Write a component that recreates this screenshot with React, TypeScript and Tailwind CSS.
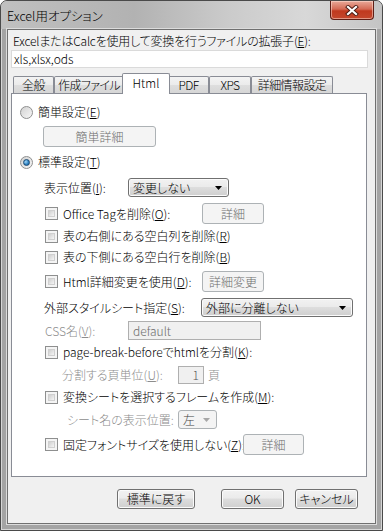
import React from "react";

// Win7 style dialog: "Excel用オプション"

const K: React.FC<{ c: string }> = ({ c }) => <u className="underline-offset-[1px]">{c}</u>;

const btnOn =
  "rounded-[3px] border border-[#707070] bg-[linear-gradient(#f2f2f2_0%,#ebebeb_45%,#dddddd_50%,#cfcfcf_100%)] shadow-[inset_0_0_0_1px_#fbfbfb] text-black";
const btnOff = "rounded-[3px] border border-[#adb2b5] bg-[#f4f4f4] text-[#6d6d6d]";

const Button: React.FC<{ w: string; label: string; off?: boolean; h?: string }> = ({ w, label, off, h }) => (
  <div className={`${w} ${h ?? "h-full"} flex items-center justify-center ${off ? btnOff : btnOn}`}>{label}</div>
);

const Arrow: React.FC<{ color: string }> = ({ color }) => (
  <svg width="7" height="4" viewBox="0 0 7 4" className="shrink-0">
    <path d="M0 0H7L3.5 4Z" fill={color} />
  </svg>
);

const Combo: React.FC<{ w: string; text: string; off?: boolean }> = ({ w, text, off }) => (
  <div className={`${w} h-full flex items-center pl-[4px] pr-[6px] ${off ? btnOff + " !text-[#444]" : btnOn}`}>
    <span className="flex-1">{text}</span>
    <Arrow color={off ? "#a7a7a7" : "#000"} />
  </div>
);

const Check: React.FC = () => (
  <div className="w-[13px] h-[13px] shrink-0 border border-[#8e8f8f] bg-[#f4f4f4] p-[2px]">
    <div className="w-full h-full border border-[#d0d0d0] bg-[linear-gradient(135deg,#cfcfcf,#f5f5f5)]" />
  </div>
);

const Radio: React.FC<{ on?: boolean }> = ({ on }) => (
  <div className="w-[13px] h-[13px] shrink-0 rounded-full border border-[#8e8f8f] bg-[linear-gradient(135deg,#d2d2d2,#f7f7f7)] flex items-center justify-center">
    {on && (
      <div className="w-[7px] h-[7px] rounded-full border border-[#1b4a73] bg-[radial-gradient(circle_at_35%_35%,#9fd6f7,#2a7fc0_60%,#135c95)]" />
    )}
  </div>
);

const CheckRow: React.FC<{ children: React.ReactNode; w?: string }> = ({ children, w }) => (
  <div className={`flex items-center gap-[5px] ${w ?? ""}`}>
    <Check />
    <span className="whitespace-nowrap">{children}</span>
  </div>
);

const tabs = ["全般", "作成ファイル", "Html", "PDF", "XPS", "詳細情報設定"];
const tabW = ["w-[41px]", "w-[70px]", "w-[48px]", "w-[41px]", "w-[42px]", "w-[82px]"];

export default function App() {
  return (
    <div className="w-[383px] h-[531px] overflow-hidden bg-white">
      <div className="w-[383px] h-[531px] flex flex-col rounded-t-[7px] border border-[#4a4a4a] bg-[#a4a4a4] shadow-[inset_0_0_0_1px_rgba(255,255,255,0.55)] text-[12px] leading-[14px] font-light text-black font-['Noto_Sans_CJK_JP',sans-serif] [font-feature-settings:'palt']">
        {/* title bar */}
        <div className="h-[28px] flex items-start rounded-t-[6px] bg-[linear-gradient(90deg,#c0c0c0_0%,#b2b2b2_35%,#cbcbcb_60%,#d8d8d8_80%,#c4c4c4_100%)]">
          <span className="self-center pl-[6px] pt-[1px] text-[12.5px]">Excel用オプション</span>
          <div className="ml-auto mr-[8px] w-[44px] h-[19px] rounded-b-[4px] border border-t-0 border-[#5e1e16] bg-[linear-gradient(#e9a999_0%,#d46a55_45%,#c0391f_55%,#c4472d_100%)] shadow-[inset_0_0_0_1px_rgba(255,230,220,0.5)] flex items-center justify-center">
            <svg width="14" height="11" viewBox="0 0 14 11">
              <path d="M3 2L11 9M11 2L3 9" stroke="#4a1a12" strokeWidth="4" strokeLinecap="square" />
              <path d="M3 2L11 9M11 2L3 9" stroke="#fff" strokeWidth="2.2" strokeLinecap="square" />
            </svg>
          </div>
        </div>

        {/* client */}
        <div className="flex-1 ml-[6px] mr-[6px] mb-[6px] border border-[#707070] shadow-[0_0_0_1px_#dcdcdc] bg-[#f0f0f0] flex flex-col pl-[3px]">
          <div className="mt-[4px] h-[14px] ml-[2px] whitespace-nowrap tracking-[-0.2px]">
            ExcelまたはCalcを使用して変換を行うファイルの拡張子(<K c="E" />):
          </div>
          <div className="mt-[2px] h-[18px] w-[357px] border border-[#dadada] bg-white flex items-center pl-[2px]">xls,xlsx,ods</div>

          {/* tabs */}
          <div className="mt-[5px] h-[20px] flex items-end pl-[2px]">
            {tabs.map((t, i) =>
              i === 2 ? (
                <div
                  key={t}
                  className={`${tabW[i]} -mx-[2px] h-[21px] -mb-[1px] relative z-10 rounded-t-[2px] border border-b-0 border-[#898c95] bg-white flex items-start justify-center pt-[2px]`}
                >
                  {t}
                </div>
              ) : (
                <div
                  key={t}
                  className={`${tabW[i]} h-[17px] rounded-t-[2px] border border-b-0 border-[#898c95] bg-[linear-gradient(#f3f3f3_0%,#ebebeb_50%,#dedede_51%,#d6d6d6_100%)] flex items-center justify-center tracking-[-0.6px] whitespace-nowrap`}
                >
                  {t}
                </div>
              )
            )}
          </div>

          {/* panel */}
          <div className="w-[356px] h-[384px] border border-[#898c95] bg-white flex flex-col">
            <div className="mt-[8px] h-[20px] pl-[8px] flex items-center gap-[5px]">
              <Radio />
              <span>簡単設定(<K c="E" />)</span>
            </div>
            <div className="mt-[4px] h-[21px] pl-[31px] flex">
              <Button w="w-[113px]" label="簡単詳細" off />
            </div>
            <div className="mt-[5px] h-[20px] pl-[8px] flex items-center gap-[5px]">
              <Radio on />
              <span>標準設定(<K c="T" />)</span>
            </div>
            <div className="mt-[6px] h-[19px] pl-[32px] flex items-center">
              <span className="w-[84px]">表示位置(<K c="I" />):</span>
              <Combo w="w-[101px]" text="変更しない" />
            </div>
            <div className="mt-[6px] h-[21px] pl-[33px] flex items-center">
              <CheckRow w="w-[157px]">
                Office Tagを削除(<K c="O" />):
              </CheckRow>
              <Button w="w-[62px]" label="詳細" off />
            </div>
            <div className="mt-[3px] h-[18px] pl-[33px] flex items-center">
              <CheckRow>
                表の右側にある空白列を削除(<K c="R" />)
              </CheckRow>
            </div>
            <div className="mt-[3px] h-[18px] pl-[33px] flex items-center">
              <CheckRow>
                表の下側にある空白行を削除(<K c="B" />)
              </CheckRow>
            </div>
            <div className="mt-[5px] h-[21px] pl-[33px] flex items-center">
              <CheckRow w="w-[157px]">
                Html詳細変更を使用(<K c="D" />):
              </CheckRow>
              <Button w="w-[62px]" label="詳細変更" off />
            </div>
            <div className="mt-[6px] h-[19px] pl-[32px] flex items-center">
              <span className="w-[157px]">外部スタイルシート指定(<K c="S" />):</span>
              <Combo w="w-[152px]" text="外部に分離しない" />
            </div>
            <div className="mt-[4px] h-[19px] pl-[33px] flex items-center text-[#8d8d8d]">
              <span className="w-[83px]">CSS名(<K c="V" />):</span>
              <div className="w-[133px] h-full border border-[#afafaf] bg-[#f0f0f0] flex items-center pl-[4px] text-[#6d6d6d]">
                default
              </div>
            </div>
            <div className="mt-[3px] h-[18px] pl-[33px] flex items-center">
              <CheckRow>
                page-break-beforeでhtmlを分割(<K c="K" />):
              </CheckRow>
            </div>
            <div className="mt-[5px] h-[18px] pl-[50px] flex items-center text-[#8d8d8d]">
              <span className="w-[116px]">分割する頁単位(<K c="U" />):</span>
              <div className="w-[26px] h-full border border-[#afafaf] bg-[#f0f0f0] flex items-center justify-end pr-[4px] text-[#555]">
                1
              </div>
              <span className="ml-[4px]">頁</span>
            </div>
            <div className="mt-[4px] h-[18px] pl-[33px] flex items-center">
              <CheckRow>
                変換シートを選択するフレームを作成(<K c="M" />):
              </CheckRow>
            </div>
            <div className="mt-[4px] h-[19px] pl-[55px] flex items-center text-[#8d8d8d]">
              <span className="w-[111px]">シート名の表示位置:</span>
              <Combo w="w-[39px]" text="左" off />
            </div>
            <div className="mt-[5px] h-[21px] pl-[33px] flex items-center">
              <CheckRow w="w-[198px]">
                固定フォントサイズを使用しない(<K c="Z" />):
              </CheckRow>
              <Button w="w-[61px]" label="詳細" off />
            </div>
          </div>

          {/* bottom buttons */}
          <div className="mt-[12px] h-[20px] flex justify-end pr-[17px]">
            <Button w="w-[78px]" label="標準に戻す" />
            <div className="w-[26px]" />
            <Button w="w-[63px]" label="OK" />
            <div className="w-[11px]" />
            <Button w="w-[63px]" label="キャンセル" />
          </div>
        </div>
      </div>
    </div>
  );
}
